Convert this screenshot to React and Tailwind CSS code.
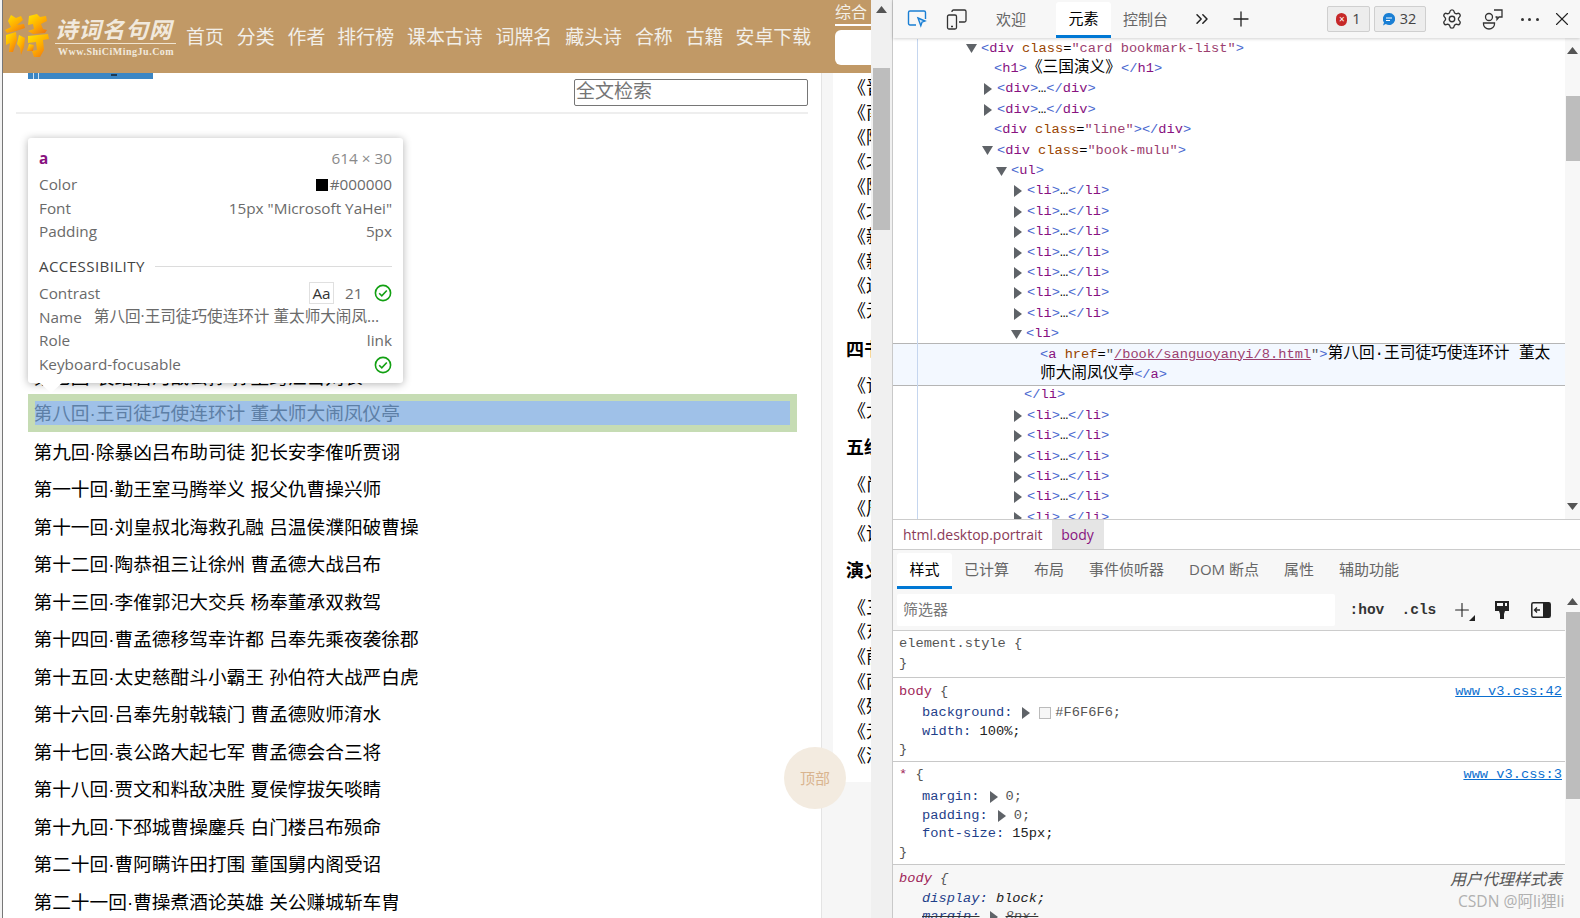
import React from "react";
import { Settings, X, Plus, ChevronsRight } from "lucide-react";

const nav = [
  ["首页", "ml-[16px]"], ["分类", "ml-[13px]"], ["作者", "ml-[13px]"], ["排行榜", "ml-[12px]"], ["课本古诗", "ml-[13px]"],
  ["词牌名", "ml-[13px]"], ["藏头诗", "ml-[13px]"], ["合称", "ml-[13px]"], ["古籍", "ml-[13px]"], ["安卓下载", "ml-[12px]"],
];
const chapters = [
  "第一回·宴桃园豪杰三结义 斩黄巾英雄首立功", "第二回·张翼德怒鞭督邮 何国舅谋诛宦竖", "第三回·议温明董卓叱丁原 馈金珠李肃说吕布",
  "第四回·废汉帝陈留践位 谋董贼孟德献刀", "第五回·发矫诏诸镇应曹公 破关兵三英战吕布", "第六回·焚金阙董卓行凶 匿玉玺孙坚背约",
  "第七回·袁绍磐河战公孙 孙坚跨江击刘表", "第八回·王司徒巧使连环计 董太师大闹凤仪亭", "第九回·除暴凶吕布助司徒 犯长安李傕听贾诩",
  "第一十回·勤王室马腾举义 报父仇曹操兴师", "第十一回·刘皇叔北海救孔融 吕温侯濮阳破曹操", "第十二回·陶恭祖三让徐州 曹孟德大战吕布",
  "第十三回·李傕郭汜大交兵 杨奉董承双救驾", "第十四回·曹孟德移驾幸许都 吕奉先乘夜袭徐郡", "第十五回·太史慈酣斗小霸王 孙伯符大战严白虎",
  "第十六回·吕奉先射戟辕门 曹孟德败师淯水", "第十七回·袁公路大起七军 曹孟德会合三将", "第十八回·贾文和料敌决胜 夏侯惇拔矢啖睛",
  "第十九回·下邳城曹操鏖兵 白门楼吕布殒命", "第二十回·曹阿瞒许田打围 董国舅内阁受诏", "第二十一回·曹操煮酒论英雄 关公赚城斩车胄",
];
const mono = "font-['Liberation_Mono','Noto_Sans_CJK_SC',monospace]";

function Tri({ dir = "right" }) {
  return dir === "down" ? (
    <svg width="11" height="9" viewBox="0 0 11 9" className="shrink-0"><path d="M0 0h11L5.5 9z" fill="#5f6368" /></svg>
  ) : (
    <svg width="8" height="12" viewBox="0 0 8 12" className="shrink-0"><path d="M0 0l8 6-8 6z" fill="#5f6368" /></svg>
  );
}
const B = ({ children }) => <span className="text-[#4a68cf]">{children}</span>;
const T = ({ children }) => <span className="text-[#881280]">{children}</span>;
const A = ({ children }) => <span className="text-[#994500]">{children}</span>;
const V = ({ children }) => <span className="text-[#9c3f6f]">{children}</span>;
const Z = ({ children }) => <span className="text-[15.7px] leading-none font-['Liberation_Mono','Noto_Sans_CJK_SC'] text-black">{children}</span>;

function Row({ pad, tri, children }) {
  return (
    <div className="flex h-[20.4px] items-center">
      <div className="w-[25px] h-full shrink-0 border-r border-[#c5d6ef]" />
      <div className={`flex items-center whitespace-nowrap ${pad}`}>
        {tri && (
          <span className={tri === "down" ? "w-[15px] flex shrink-0" : "w-[15px] flex pl-[2px] shrink-0"}>
            <Tri dir={tri} />
          </span>
        )}
        <span className="leading-[20px]">{children}</span>
      </div>
    </div>
  );
}
const Li = () => (
  <Row pad="pl-[94px]" tri="right"><B>&lt;</B><T>li</T><B>&gt;</B>…<B>&lt;/</B><T>li</T><B>&gt;</B></Row>
);

function Sb({ items }) {
  return items.map((t) => (
    <div key={t} className="h-[24.8px] leading-[24.8px] pl-[15px] text-[18px] whitespace-nowrap text-black">{t}</div>
  ));
}
const Check = () => (
  <svg width="18" height="18" viewBox="0 0 18 18" fill="none" stroke="#12a012" strokeWidth="1.6">
    <circle cx="9" cy="9" r="7.6" /><path d="M5.2 9.3l2.6 2.6 5-5.4" />
  </svg>
);
function TipRow({ label, children, cls = "h-[23.8px]" }) {
  return (
    <div className={`flex items-center justify-between ${cls}`}>
      <span className="shrink-0">{label}</span>
      {children}
    </div>
  );
}
function Sc({ thumb, top, bottom }) {
  return (
    <svg width="11" height="7" viewBox="0 0 11 7" className={`${top ?? ""} ${bottom ?? ""} shrink-0 self-center`}>
      <path d={thumb ? "M0 7h11L5.5 0z" : "M0 0h11L5.5 7z"} fill="#555" />
    </svg>
  );
}
const Decl = ({ children, cls = "" }) => <div className={`h-[18px] leading-[18px] pl-[29px] whitespace-nowrap ${cls}`}>{children}</div>;
const Line = ({ children, cls = "" }) => <div className={`h-[19px] leading-[19px] pl-[6px] whitespace-nowrap ${cls}`}>{children}</div>;
const Sel = ({ children }) => <span className="text-[#a0285a]">{children}</span>;
const P = ({ children }) => <span className="text-[#1f3f8a]">{children}</span>;
const Br = ({ children }) => <span className="text-[#555]">{children}</span>;

export default function App() {
  return (
    <div className="flex w-[1580px] h-[918px] overflow-hidden bg-white font-['Open_Sans','Noto_Sans_CJK_SC',sans-serif]">
      {/* left edge */}
      <div className="w-[3px] shrink-0 bg-[#f2f2f2] border-r border-[#777]" />

      {/* page */}
      <div className="w-[868px] shrink-0 flex flex-col font-['Liberation_Sans','Noto_Sans_CJK_SC',sans-serif] relative">
        <header className="h-[73px] shrink-0 bg-[#c19966] flex">
          <div className="flex items-start w-[167px] shrink-0">
            <svg width="46" height="46" viewBox="0 0 46 46" className="mt-[13px] ml-[1px] shrink-0">
              <defs>
                <linearGradient id="lg" x1="0" y1="0" x2="0.8" y2="1">
                  <stop offset="0" stopColor="#ffe600" /><stop offset="0.55" stopColor="#ffb000" /><stop offset="1" stopColor="#f07a10" />
                </linearGradient>
              </defs>
              <g fill="url(#lg)">
                <path d="M7 2l5 3 5-2 2 4-6 5 7-1 1 4-9 3-9 2-2-3 6-3-3-6z" />
                <path d="M2 22l10-3 1 8-4 12-4 0 1-9-4 2z" />
                <path d="M15 22l6 3-1 9-3 8-1-7-3-4z" />
                <path d="M25 3l8-2 3 3 6-1 1 5-6 3 2 5 4 1-2 3-12 1-5-3 6-2-1-5-5 1z" />
                <path d="M24 23l20-2 1 5-6 1 1 10-4 7-6 0-2-6 5-1-1-8-8 1z" />
                <path d="M25 31l5 1-1 6-6 0z" />
              </g>
            </svg>
            <div className="ml-[5px] w-[121px] shrink-0 mt-[16px]">
              <div className="h-[28px] leading-[25px] text-[22.5px] font-bold italic font-['Noto_Sans_CJK_SC'] text-[#f1e9dd] whitespace-nowrap tracking-[1px] border-b border-[#f0e4d0]">诗词名句网</div>
              <div className="mt-[1px] pl-[3px] text-[10px] leading-[13px] font-bold font-['Liberation_Serif',serif] text-[#f1e9dd] whitespace-nowrap tracking-[0.5px]">Www.ShiCiMingJu.Com</div>
            </div>
          </div>
          <nav className="flex items-center h-[73px] pt-[3px] w-[655px] shrink-0">
            {nav.map(([t, m]) => (
              <span key={t} className={`${m} text-[18.9px] text-[#f2efe9] whitespace-nowrap`}>{t}</span>
            ))}
          </nav>
          <div className="flex-1 overflow-hidden pl-[10px]">
            <div className="h-[26px] text-[16px] leading-[26px] text-[#f4f0e8] border-b-2 border-white whitespace-nowrap">综合</div>
            <div className="mt-[4px] h-[35px] bg-white rounded-l-[6px]" />
          </div>
        </header>

        <div className="flex flex-1 min-h-0">
          {/* main column */}
          <main className="w-[818px] shrink-0 bg-white overflow-hidden">
            <div className="flex justify-between h-[33px] pl-[25px] pr-[13px]">
              <div className="w-[125px] h-[6px] bg-[#3b86c4] flex">
                <span className="ml-[5px] w-px bg-[#cfe2f3]" />
                <span className="ml-[4px] w-px bg-[#cfe2f3]" />
                <span className="ml-[72px] mt-[1px] w-[6px] h-[2px] bg-[#1d3a55]" />
              </div>
              <input readOnly placeholder="全文检索" className="mt-[6px] w-[234px] h-[27px] px-[1px] pb-[1px] border border-[#767676] rounded-[2px] text-[19px] leading-[20px] bg-white placeholder:text-[#757575] outline-none" />
            </div>
            <div className="mt-[6px] ml-[13px] mr-[13px] h-[2px] bg-[#eeeeee]" />
            <ul className="mt-[17.5px] ml-[25px]">
              {chapters.map((c, i) =>
                i === 7 ? (
                  <li key={c} className="w-[768.6px] h-[37.5px] bg-[#c6dcb4] p-[6.5px] flex">
                    <a className="flex-1 bg-[#9fc1e8] flex items-center pt-[3px] -indent-px text-[18.7px] text-[#5d7fa6] whitespace-nowrap">{c}</a>
                  </li>
                ) : (
                  <li key={c} className="w-[768.6px] h-[37.5px] pl-[5.5px] pr-[6.5px] pt-[5px] flex items-center">
                    <a className="text-[18.7px] text-black whitespace-nowrap">{c}</a>
                  </li>
                )
              )}
            </ul>
          </main>
          {/* gutter + sidebar */}
          <div className="w-[12px] shrink-0 bg-[#f6f6f6] border-l border-[#e4e4e4]" />
          <aside className="w-[38px] shrink-0 bg-[#f6f6f6] overflow-hidden">
            <div className="bg-white h-[709px] pt-[3px] overflow-hidden">
              <Sb items={["《晋书》", "《南史》", "《陈书》", "《北史》", "《隋书》", "《北齐书》", "《新唐书》", "《新五代史》", "《辽史》", "《元史》"]} />
              <h3 className="mt-[10.8px] mb-[9.6px] h-[30px] leading-[30px] pl-[13px] text-[18px] font-bold whitespace-nowrap text-black">四书</h3>
              <Sb items={["《论语》", "《大学》"]} />
              <h3 className="mt-[9px] mb-[9.6px] h-[30px] leading-[30px] pl-[13px] text-[18px] font-bold whitespace-nowrap text-black">五经</h3>
              <Sb items={["《尚书》", "《周易》", "《诗经》"]} />
              <h3 className="mt-[9px] mb-[9.6px] h-[30px] leading-[30px] pl-[13px] text-[18px] font-bold whitespace-nowrap text-black">演义</h3>
              <Sb items={["《三国演义》", "《东周列国》", "《前汉演义》", "《两晋演义》", "《残唐五代》", "《元史演义》", "《清史演义》"]} />
            </div>
          </aside>
        </div>

        {/* back-to-top button */}
        <div className="absolute left-[781px] top-[747px] w-[62px] h-[62px] rounded-full bg-[#f3ebe0] flex items-center justify-center text-[15px] pt-[2px] text-[#d9b48f]">顶部</div>

        {/* inspector tooltip */}
        <div className="absolute left-[25px] top-[138px] w-[375px] h-[245px] bg-white rounded-[3px] shadow-[0_1px_8px_rgba(0,0,0,0.3)] px-[11px] pt-[9px] text-[15.3px] text-[#6a6a6a] font-['Open_Sans','Noto_Sans_CJK_SC',sans-serif]">
          <div className="flex items-center justify-between h-[23px] mb-[3px]">
            <span className="font-bold text-[#881280]">a</span>
            <span className="text-[#8a8a8a]">614 × 30</span>
          </div>
          <TipRow label="Color" cls="h-[23.4px]">
            <span className="flex items-center gap-[2px]"><span className="w-[12px] h-[12px] bg-black" />#000000</span>
          </TipRow>
          <TipRow label="Font" cls="h-[23.4px]">15px "Microsoft YaHei"</TipRow>
          <TipRow label="Padding" cls="h-[23.4px]">5px</TipRow>
          <div className="flex items-center h-[24px] mt-[11px] mb-[3.2px]">
            <span className="font-medium text-[#444] tracking-[0.4px] text-[15.1px]">ACCESSIBILITY</span>
            <div className="flex-1 h-px bg-[#dcdcdc] ml-[10px]" />
          </div>
          <TipRow label="Contrast">
            <span className="flex items-center">
              <span className="w-[25px] h-[22px] border border-[#e0e0e0] flex items-center justify-center text-[#333]">Aa</span>
              <span className="ml-[11px] w-[17px]">21</span>
              <span className="ml-[12px] flex"><Check /></span>
            </span>
          </TipRow>
          <TipRow label="Name"><span className="ml-[12px] min-w-0 truncate text-[15.6px]">第八回·王司徒巧使连环计 董太师大闹凤仪亭</span></TipRow>
          <TipRow label="Role">link</TipRow>
          <TipRow label="Keyboard-focusable"><Check /></TipRow>
          <svg width="24" height="11" viewBox="0 0 24 11" className="absolute left-[11px] top-[244px]"><path d="M0 0h24L12 11z" fill="#fff" /></svg>
        </div>
      </div>

      {/* page scrollbar */}
      <div className="w-[22px] shrink-0 bg-[#f0f0f0] border-r border-[#c9c9c9] flex flex-col items-center">
        <Sc thumb top="mt-[6px]" />
        <div className="mt-[55px] w-[17px] h-[162px] bg-[#bdbdbd]" />
      </div>

      {/* devtools */}
      <div className="flex-1 min-w-0 flex flex-col relative">
        <div className="h-[38px] shrink-0 bg-[#f7f7f7] flex items-center shadow-[0_1px_3px_rgba(0,0,0,0.18)] relative z-10 text-[15px] text-[#666]">
          <svg width="20" height="20" viewBox="0 0 20 20" fill="none" stroke="#1a7fd4" strokeWidth="1.4" className="ml-[14px] shrink-0">
            <path d="M9 16H3a1.5 1.5 0 0 1-1.5-1.5v-11A1.5 1.5 0 0 1 3 2h14a1.5 1.5 0 0 1 1.5 1.5V10" />
            <path d="M11 9l7 3-3 1.2-1.2 3.5z" fill="#cfe6fa" />
          </svg>
          <svg width="21" height="21" viewBox="0 0 21 21" fill="none" stroke="#333" strokeWidth="1.3" className="ml-[19px] shrink-0">
            <rect x="1.5" y="6" width="9" height="14" rx="1.5" />
            <path d="M6 3V2.5A1.5 1.5 0 0 1 7.500 1h11A1.5 1.5 0 0 1 20 2.500v9a1.500 1.500 0 0 1-1.500 1.500H13" />
            <path d="M5 17.500h2" />
          </svg>
          <span className="ml-[29px] w-[30px] shrink-0 whitespace-nowrap">欢迎</span>
          <span className="ml-[30px] w-[55px] h-[36px] mt-[1px] shrink-0 bg-white rounded-t-[3px] border-b-[3px] border-[#0078d4] flex items-center justify-center text-black">元素</span>
          <span className="ml-[12px] w-[45px] shrink-0 whitespace-nowrap">控制台</span>
          <ChevronsRight size={20} strokeWidth={1.8} className="ml-[24px] shrink-0 text-[#222]" />
          <Plus size={24} strokeWidth={1.3} className="ml-[17px] shrink-0 text-[#222]" />
          <div className="ml-[74px] w-[43px] h-[26px] shrink-0 bg-[#ededed] border border-[#cfcfcf] rounded-[2px] flex items-center justify-center gap-[5px] text-[14.5px] text-[#444]">
            <span className="w-[11px] h-[13px] rounded-full bg-[#c62828] text-white text-[10px] leading-[12px] text-center">×</span>1
          </div>
          <div className="ml-[3.500px] w-[52px] h-[26px] shrink-0 bg-[#ededed] border border-[#cfcfcf] rounded-[2px] flex items-center justify-center gap-[5px] text-[14.500px] text-[#444]">
            <svg width="12" height="13" viewBox="0 0 12 13" className="shrink-0">
              <path d="M6 0a6 6 0 1 1-3.200 11L0 12.500 1 9.500A6 6 0 0 1 6 0z" fill="#1a7fd4" />
              <path d="M3 5h6M3 7.500h4" stroke="#fff" strokeWidth="1" />
            </svg>
            32
          </div>
          <Settings size={22} strokeWidth={1.5} className="ml-[15px] shrink-0 text-[#333]" />
          <svg width="22" height="22" viewBox="0 0 22 22" fill="none" stroke="#333" strokeWidth="1.300" className="ml-[19px] shrink-0">
            <circle cx="7" cy="9" r="3.500" />
            <path d="M1.500 15h11v1a5.500 5 0 0 1-11 0z" />
            <path d="M12 2h8v7h-3l-2 2.500V9h-1.500" />
          </svg>
          <span className="ml-[16px] w-[20px] shrink-0 flex justify-between px-[1px]">
            <span className="w-[3px] h-[3px] rounded-full bg-[#333]" /><span className="w-[3px] h-[3px] rounded-full bg-[#333]" /><span className="w-[3px] h-[3px] rounded-full bg-[#333]" />
          </span>
          <X size={22} strokeWidth={1.2} className="ml-[11px] shrink-0 text-[#222]" />
        </div>

        {/* DOM tree */}
        <div className="h-[482px] shrink-0 flex overflow-hidden border-b border-[#cccccc] bg-white">
          <div className={`flex-1 min-w-0 pt-[0.5px] overflow-hidden text-[13.700px] ${mono} text-black`}>
            <Row pad="pl-[48px]" tri="down"><B>&lt;</B><T>div</T> <A>class</A>=<V>"card bookmark-list"</V><B>&gt;</B></Row>
            <Row pad="pl-[76px]"><B>&lt;</B><T>h1</T><B>&gt;</B><Z>《三国演义》</Z><B>&lt;/</B><T>h1</T><B>&gt;</B></Row>
            <Row pad="pl-[64px]" tri="right"><B>&lt;</B><T>div</T><B>&gt;</B>…<B>&lt;/</B><T>div</T><B>&gt;</B></Row>
            <Row pad="pl-[64px]" tri="right"><B>&lt;</B><T>div</T><B>&gt;</B>…<B>&lt;/</B><T>div</T><B>&gt;</B></Row>
            <Row pad="pl-[76px]"><B>&lt;</B><T>div</T> <A>class</A>=<V>"line"</V><B>&gt;&lt;/</B><T>div</T><B>&gt;</B></Row>
            <Row pad="pl-[64px]" tri="down"><B>&lt;</B><T>div</T> <A>class</A>=<V>"book-mulu"</V><B>&gt;</B></Row>
            <Row pad="pl-[78px]" tri="down"><B>&lt;</B><T>ul</T><B>&gt;</B></Row>
            <Li /><Li /><Li /><Li /><Li /><Li /><Li />
            <Row pad="pl-[93px]" tri="down"><B>&lt;</B><T>li</T><B>&gt;</B></Row>
            <div className="bg-[#f3f8ff] border-y border-[#b5b5b5] -my-px h-[42.800px] flex flex-col justify-center">
              <Row pad="pl-[122px]"><B>&lt;</B><T>a</T> <A>href</A>=<span className="text-[#555]">"</span><span className="text-[#9c3f6f] underline">/book/sanguoyanyi/8.html</span><span className="text-[#555]">"</span><B>&gt;</B><Z>第八回·王司徒巧使连环计 董太</Z></Row>
              <Row pad="pl-[122px]"><Z>师大闹凤仪亭</Z><B>&lt;/</B><T>a</T><B>&gt;</B></Row>
            </div>
            <Row pad="pl-[106px]"><B>&lt;/</B><T>li</T><B>&gt;</B></Row>
            <Li /><Li /><Li /><Li /><Li /><Li />
          </div>
          <div className="w-[15px] shrink-0 bg-[#f7f7f7] flex flex-col items-end">
            <Sc thumb top="mt-[9px] mr-[0px]" />
            <div className="mt-[42px] w-[14px] h-[65px] bg-[#bdbdbd]" />
            <Sc bottom="mt-auto mb-[9px]" />
          </div>
        </div>

        {/* breadcrumb */}
        <div className="h-[30px] shrink-0 flex items-stretch border-b border-[#cccccc] pl-[10px] text-[14px]">
          <span className="flex items-center text-[#8a3b58] whitespace-nowrap">html.desktop.portrait</span>
          <span className="ml-[9px] w-[52px] bg-[#e5e5e5] flex items-center justify-center text-[#881280]">body</span>
        </div>

        {/* tabs */}
        <div className="h-[40px] shrink-0 bg-[#f7f7f7] flex items-end pb-[1px] pl-[4px] text-[15px] text-[#666] gap-[25px]">
          <span className="w-[55px] h-[36px] -mr-[13px] bg-white rounded-t-[3px] border-b-[3px] border-[#0078d4] flex items-center justify-center text-black">样式</span>
          {["已计算", "布局", "事件侦听器", "DOM 断点", "属性", "辅助功能"].map((t) => (
            <span key={t} className="h-[36px] leading-[33px] whitespace-nowrap">{t}</span>
          ))}
        </div>

        {/* styles */}
        <div className="flex-1 min-h-0 flex">
          <div className="flex-1 min-w-0 flex flex-col">
            <div className="h-[41px] shrink-0 bg-[#f7f7f7] border-b border-[#cccccc] flex items-center pl-[4px] pb-[1px]">
              <div className="w-[437.500px] h-[32px] bg-white rounded-[2px] pl-[6px] flex items-center text-[15px] text-[#777]">筛选器</div>
              <span className={`ml-[15px] w-[34px] mt-[3px] text-[14.500px] font-bold text-[#333] ${mono}`}>:hov</span>
              <span className={`ml-[18px] w-[33px] mt-[3px] text-[14.500px] font-bold text-[#333] ${mono}`}>.cls</span>
              <span className="ml-[16px] relative flex w-[22px] h-[22px]">
                <Plus size={22} strokeWidth={1.2} className="text-[#222]" />
                <svg width="6" height="6" viewBox="0 0 6 6" className="absolute -right-[2px] bottom-0"><path d="M6 0v6H0z" fill="#222" /></svg>
              </span>
              <svg width="16" height="20" viewBox="0 0 16 20" className="ml-[21px] shrink-0">
                <path d="M1 1h14v10H1z" fill="#222" /><path d="M3 3h10v3H3z" fill="#f7f7f7" /><path d="M9 3h2v3H9z" fill="#222" /><path d="M5 11h6l-1 3v5H6v-5z" fill="#222" />
              </svg>
              <svg width="20" height="16" viewBox="0 0 20 16" className="ml-[21px] shrink-0" fill="none">
                <rect x="0.800" y="0.800" width="18.400" height="14.400" rx="1.500" stroke="#222" strokeWidth="1.500" />
                <path d="M12 1h7v14h-7z" fill="#222" /><path d="M9 8H4M6 5.500L3.500 8 6 10.500" stroke="#222" strokeWidth="1.300" />
              </svg>
            </div>
            <div className={`flex-1 min-h-0 overflow-hidden text-[13.700px] ${mono} text-[#333]`}>
              <div className="h-[47px] pt-[3px] border-b border-[#c8c8c8]">
                <div className="h-[20px] leading-[20px] pl-[6px]"><span className="text-[#555]">element.style</span> <Br>{"{"}</Br></div>
                <div className="h-[20px] leading-[20px] pl-[6px]"><Br>{"}"}</Br></div>
              </div>
              <div className="h-[84px] pt-[4px] border-b border-[#c8c8c8]">
                <Line cls="flex justify-between pr-[3px]"><span><Sel>body</Sel> <Br>{"{"}</Br></span><span className="text-[#0b6fd0] underline">www_v3.css:42</span></Line>
                <Decl cls="mt-[3px] flex items-center"><P>background:</P><span className="ml-[10px] flex"><Tri /></span><span className="ml-[9px] w-[12px] h-[12px] border border-[#bbb] bg-[#f6f6f6]" /><span className="ml-[4px] text-[#555]">#F6F6F6;</span></Decl>
                <Decl cls="mt-px"><P>width:</P> <span className="text-[#222]">100%;</span></Decl>
                <Line cls="-mt-[1px]"><Br>{"}"}</Br></Line>
              </div>
              <div className="h-[103px] pt-[3px] border-b border-[#c8c8c8]">
                <Line cls="flex justify-between pr-[3px]"><span><Sel>*</Sel> <Br>{"{"}</Br></span><span className="text-[#0b6fd0] underline">www_v3.css:3</span></Line>
                <Decl cls="mt-[4px] flex items-center"><P>margin:</P><span className="ml-[10px] flex"><Tri /></span><span className="ml-[8px] text-[#555]">0;</span></Decl>
                <Decl cls="mt-px flex items-center"><P>padding:</P><span className="ml-[10px] flex"><Tri /></span><span className="ml-[8px] text-[#555]">0;</span></Decl>
                <Decl><P>font-size:</P> <span className="text-[#222]">15px;</span></Decl>
                <Line><Br>{"}"}</Br></Line>
              </div>
              <div className="h-[60px] pt-[4px] bg-[#f7f7f7] italic">
                <Line cls="flex justify-between pr-[3px]"><span><Sel>body</Sel> <Br>{"{"}</Br></span><span className="text-[16px] text-[#555] font-['Noto_Sans_CJK_SC']">用户代理样式表</span></Line>
                <Decl cls="mt-[2px]"><P>display:</P> <span className="text-[#222]">block;</span></Decl>
                <Decl cls="flex items-center line-through"><P>margin:</P><span className="ml-[10px] flex"><Tri /></span><span className="ml-[8px] text-[#555]">8px;</span></Decl>
              </div>
            </div>
          </div>
          <div className="w-[15px] shrink-0 bg-[#f7f7f7] flex flex-col items-end">
            <Sc thumb top="mt-[8px]" />
            <div className="mt-[7px] w-[14px] h-[187px] bg-[#bdbdbd]" />
          </div>
        </div>

        {/* watermark */}
        <div className="absolute left-[565px] top-[891px] text-[15.6px] leading-[20px] text-[#b0b0b0] whitespace-nowrap">CSDN @阿li狸li</div>
      </div>
    </div>
  );
}
